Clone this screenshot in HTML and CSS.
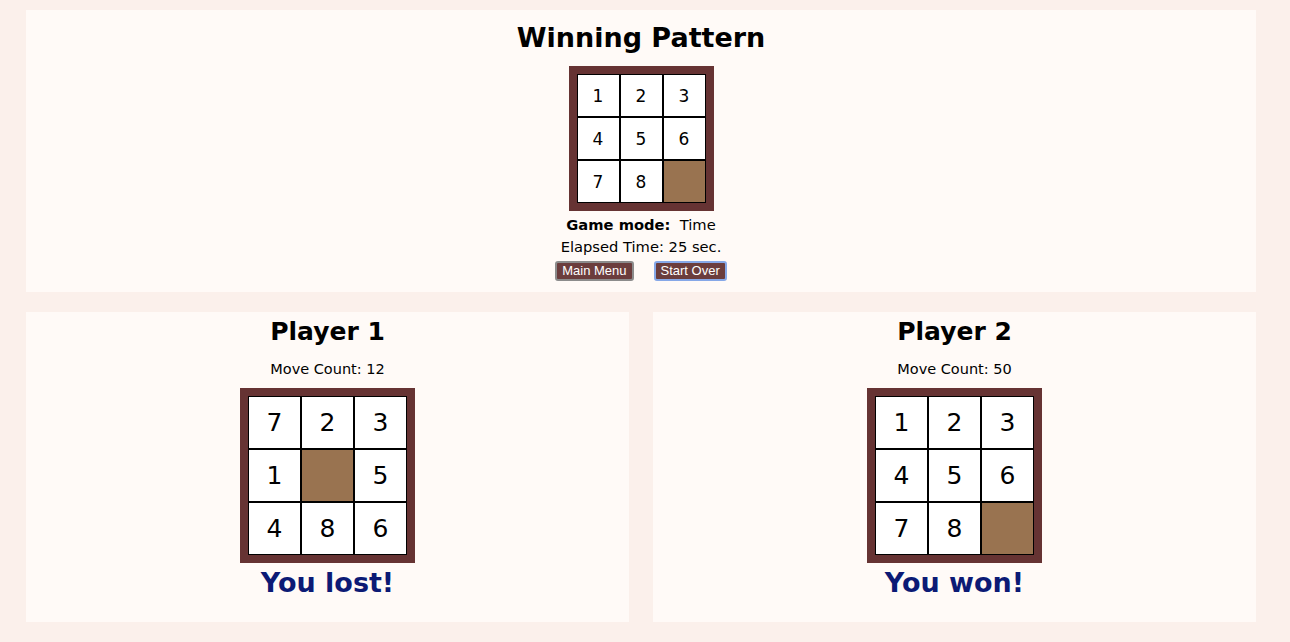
FILE: index.html
```html
<!DOCTYPE html>
<html lang="en">
<head>
    <meta charset="UTF-8">
    <title>Sliding Puzzle - Results</title>
    <link rel="stylesheet" href="styles.css">
</head>
<body>
    <div class="panel top-panel">
        <h1 class="title">Winning Pattern</h1>
        <div class="board small">
            <div class="tile">1</div><div class="tile">2</div><div class="tile">3</div>
            <div class="tile">4</div><div class="tile">5</div><div class="tile">6</div>
            <div class="tile">7</div><div class="tile">8</div><div class="tile empty"></div>
        </div>
        <p class="info mode"><strong>Game mode:</strong>&nbsp; Time</p>
        <p class="info">Elapsed Time: 25 sec.</p>
        <div class="buttons">
            <button class="btn">Main Menu</button>
            <button class="btn focused">Start Over</button>
        </div>
    </div>

    <div class="players">
        <div class="panel player">
            <h2 class="title">Player 1</h2>
            <p class="moves">Move Count: 12</p>
            <div class="board big">
                <div class="tile">7</div><div class="tile">2</div><div class="tile">3</div>
                <div class="tile">1</div><div class="tile empty"></div><div class="tile">5</div>
                <div class="tile">4</div><div class="tile">8</div><div class="tile">6</div>
            </div>
            <h2 class="result">You lost!</h2>
        </div>
        <div class="panel player">
            <h2 class="title">Player 2</h2>
            <p class="moves">Move Count: 50</p>
            <div class="board big">
                <div class="tile">1</div><div class="tile">2</div><div class="tile">3</div>
                <div class="tile">4</div><div class="tile">5</div><div class="tile">6</div>
                <div class="tile">7</div><div class="tile">8</div><div class="tile empty"></div>
            </div>
            <h2 class="result">You won!</h2>
        </div>
    </div>
</body>
</html>
```

FILE: styles.css
```css
body { margin: 0; padding: 10px 34px 20px 26px; background-color: #fbf0eb; font-family: "DejaVu Sans", sans-serif; color: #000; }

.panel { background-color: #fffaf7; text-align: center; display: flex; flex-direction: column; align-items: center; }
.top-panel { height: 262px; padding: 10px 0; }

.title { margin: 0; font-size: 27px; line-height: 36px; font-weight: bold; }
.player .title { font-size: 25px; }
.info { margin: 0; font-size: 14.7px; line-height: 22px; }
.info.mode { margin-top: 3px; }
.info strong { font-weight: bold; }

.buttons { display: flex; gap: 20px; margin-top: 3px; }
.btn { font-family: "Liberation Sans", Arial, sans-serif; font-size: 13px; color: #fff; background-color: #6b3d3d; border: 2px solid #8c8c8c; border-radius: 3px; padding: 0 5px; height: 20px; line-height: 16px; }
.btn.focused { border-color: #86a8e8; }

/* puzzle boards */
.board { display: grid; border: 8px solid #663333; background-color: #663333; }
.board.small { grid-template-columns: repeat(3, 43px); grid-template-rows: repeat(3, 43px); margin-top: 10px; }
.board.big { grid-template-columns: repeat(3, 53px); grid-template-rows: repeat(3, 53px); margin-top: 8px; }
.tile { background-color: #fff; border: 1px solid #000; display: flex; align-items: center; justify-content: center; }
.small .tile { font-size: 17px; }
.big .tile { font-size: 25px; }
.tile.empty { background-color: #997350; }

.players { display: flex; gap: 24px; margin-top: 20px; }
.player { flex: 1; height: 308px; padding-top: 2px; }
.moves { margin: 8px 0 0; font-size: 14.5px; line-height: 22px; }
.result { margin: 2px 0 0; font-size: 27px; line-height: 36px; font-weight: bold; color: #0c1a75; }
```
